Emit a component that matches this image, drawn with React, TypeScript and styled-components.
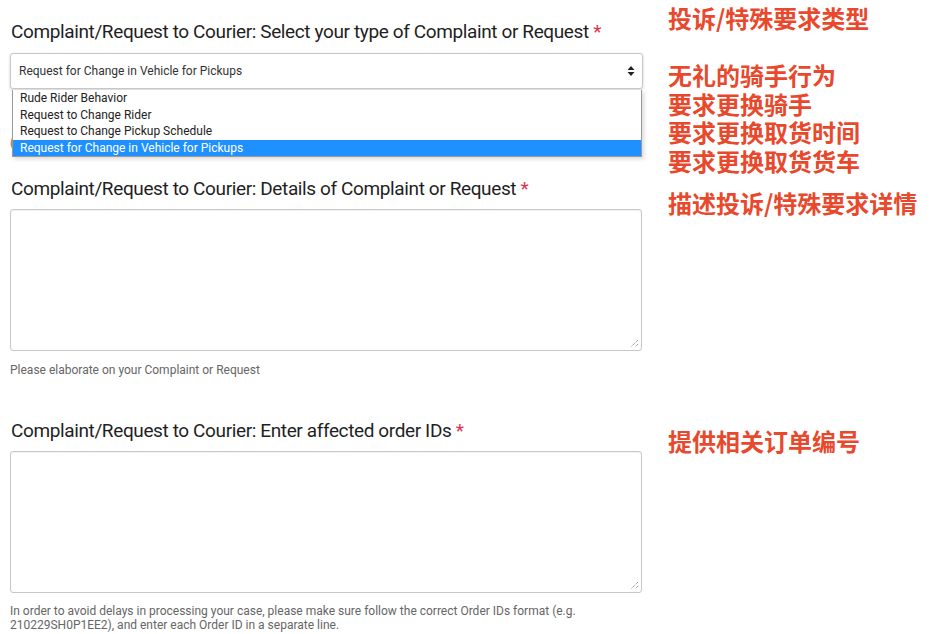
import React from "react";
import styled, { createGlobalStyle } from "styled-components";

const Global = createGlobalStyle`
  html, body { margin: 0; padding: 0; background: #fff; }
  body { font-family: Roboto, "Noto Sans", Arial, sans-serif; color: #222; }
  * { box-sizing: border-box; }
`;

const Page = styled.div`
  display: flex;
  width: 933px;
  height: 634px;
  overflow: hidden;
`;

const FormColumn = styled.div`
  width: 658px;
  padding: 20px 0 0 10px;
  display: flex;
  flex-direction: column;
`;

const Field = styled.section<{ $gap: number; $top?: number }>`
  display: flex;
  flex-direction: column;
  width: 632px;
  margin-top: ${(p) => p.$top ?? 0}px;
  margin-bottom: ${(p) => p.$gap}px;
  position: relative;
`;

const Label = styled.div<{ $mb: number }>`
  font-size: 19px;
  line-height: 24px;
  color: #1f1f1f;
  padding-left: 1px;
  margin-bottom: ${(p) => p.$mb}px;
  letter-spacing: -0.38px;
`;

const Star = styled.span`
  color: #e0314b;
`;

const SelectBox = styled.div`
  height: 36px;
  width: 633px;
  border: 1px solid #c8c8c8;
  border-radius: 3px;
  background: #fff;
  box-shadow: 0 1px 3px rgba(0, 0, 0, 0.18);
  display: flex;
  align-items: center;
  justify-content: space-between;
  padding: 0 7px 0 8px;
  font-size: 12px;
  color: #333;
`;

const DropList = styled.ul`
  position: absolute;
  left: 2px;
  top: 70px;
  width: 630px;
  margin: 0;
  padding: 0;
  list-style: none;
  background: #fff;
  border: 1px solid #9a9a9a;
  border-top: none;
  box-shadow: 2px 2px 4px rgba(0, 0, 0, 0.15);
  z-index: 2;
`;

const Option = styled.li<{ $active?: boolean }>`
  height: 16.5px;
  line-height: 16.5px;
  padding-left: 7px;
  font-size: 12px;
  color: ${(p) => (p.$active ? "#fff" : "#222")};
  background: ${(p) => (p.$active ? "#1e90ff" : "transparent")};
`;

const TextArea = styled.div`
  position: relative;
  height: 142px;
  width: 632px;
  border: 1px solid #c8c8c8;
  border-radius: 3px;
  background: #fff;
  box-shadow: inset 0 1px 2px rgba(0, 0, 0, 0.06);
`;

const Grip = styled.svg`
  position: absolute;
  right: 2px;
  bottom: 2px;
`;

const Help = styled.div<{ $mt: number }>`
  margin-top: ${(p) => p.$mt}px;
  font-size: 12px;
  line-height: 14px;
  color: #666;
`;

const Hidden = styled.div`
  margin-top: 47px;
  font-size: 12px;
  line-height: 14px;
  color: #b06a2a;
`;

const NoteColumn = styled.div`
  display: flex;
  flex-direction: column;
  padding-left: 10px;
`;

const Note = styled.div<{ $mt: number; $lh?: number }>`
  margin-top: ${(p) => p.$mt}px;
  font-family: "Noto Sans CJK SC", "Noto Sans", sans-serif;
  font-weight: 700;
  font-size: 24px;
  line-height: ${(p) => p.$lh ?? 28.5}px;
  height: ${(p) => p.$lh ?? 28.5}px;
  color: #e8492d;
  white-space: nowrap;
`;

const Resize = () => (
  <Grip width="10" height="10" viewBox="0 0 10 10">
    <path d="M9 2 L2 9 M9 6 L6 9" stroke="#777" strokeWidth="1" strokeDasharray="1 1" />
  </Grip>
);

const typeNotes = ["无礼的骑手行为", "要求更换骑手", "要求更换取货时间", "要求更换取货货车"];

export default function App() {
  return (
    <>
      <Global />
      <Page>
        <FormColumn>
          <Field $gap={0}>
            <Label $mb={9}>
              Complaint/Request to Courier: Select your type of Complaint or Request <Star>*</Star>
            </Label>
            <SelectBox>
              <span>Request for Change in Vehicle for Pickups</span>
              <svg width="8" height="12" viewBox="0 0 8 12">
                <path d="M4 1 L7.5 5 H0.5 Z M4 11 L7.5 7 H0.5 Z" fill="#222" />
              </svg>
            </SelectBox>
            <DropList>
              <Option>Rude Rider Behavior</Option>
              <Option>Request to Change Rider</Option>
              <Option>Request to Change Pickup Schedule</Option>
              <Option $active>Request for Change in Vehicle for Pickups</Option>
            </DropList>
            <Hidden>(</Hidden>
          </Field>
          <Field $gap={42} $top={27}>
            <Label $mb={8}>
              Complaint/Request to Courier: Details of Complaint or Request <Star>*</Star>
            </Label>
            <TextArea>
              <Resize />
            </TextArea>
            <Help $mt={12}>Please elaborate on your Complaint or Request</Help>
          </Field>
          <Field $gap={0}>
            <Label $mb={8}>
              Complaint/Request to Courier: Enter affected order IDs <Star>*</Star>
            </Label>
            <TextArea>
              <Resize />
            </TextArea>
            <Help $mt={11}>
              In order to avoid delays in processing your case, please make sure follow the correct Order IDs format (e.g.
              <br />
              210229SH0P1EE2), and enter each Order ID in a separate line.
            </Help>
          </Field>
        </FormColumn>
        <NoteColumn>
          <Note $mt={0} $lh={35}>投诉/特殊要求类型</Note>
          <Note $mt={26}>{typeNotes[0]}</Note>
          {typeNotes.slice(1).map((t) => (
            <Note key={t} $mt={0}>
              {t}
            </Note>
          ))}
          <Note $mt={14}>描述投诉/特殊要求详情</Note>
          <Note $mt={209}>提供相关订单编号</Note>
        </NoteColumn>
      </Page>
    </>
  );
}
